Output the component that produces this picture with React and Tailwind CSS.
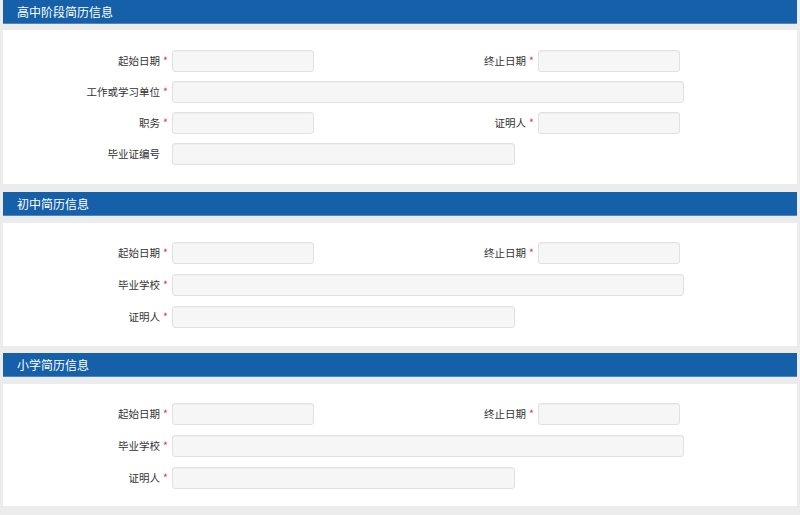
const font = { fontFamily: '"Microsoft YaHei", "Noto Sans CJK SC", "Noto Sans", sans-serif' }

function Label({ text, required, className = '' }) {
  return (
    <div className={`flex items-center justify-end shrink-0 text-[10.5px] text-[#333] ${className}`}>
      <span>{text}</span>
      <span className={`w-[11px] text-center text-[#e53935] ${required ? '' : 'invisible'}`}>*</span>
    </div>
  )
}

function Input({ className = '' }) {
  return (
    <div
      className={`h-[22px] rounded-[3px] border border-[#e1e1e1] bg-[#f6f6f6] shadow-[inset_0_1px_1px_rgba(0,0,0,0.03)] ${className}`}
    />
  )
}

function DateRow() {
  return (
    <div className="flex items-center">
      <Label text="起始日期" required className="w-[169px] pr-[1px]" />
      <Input className="w-[142px]" />
      <Label text="终止日期" required className="w-[224px] pr-[1px]" />
      <Input className="w-[142px]" />
    </div>
  )
}

function Row({ label, required = true, width }) {
  return (
    <div className="flex items-center">
      <Label text={label} required={required} className="w-[169px] pr-[1px]" />
      <Input className={width} />
    </div>
  )
}

function Section({ title, children, className = '', bodyClass = '' }) {
  return (
    <section className={className}>
      <div className="h-[24px] bg-[#1660a9] border-b border-[#4f86c0] flex items-center pl-[14px] text-[12px] text-white">
        {title}
      </div>
      <div className={`bg-white flex flex-col ${bodyClass}`}>{children}</div>
    </section>
  )
}

export default function App() {
  return (
    <div className="w-[800px] h-[515px] overflow-hidden bg-[#ececec] px-[3px]" style={font}>
      <Section title="高中阶段简历信息" bodyClass="mt-[6px] gap-[9px] pt-[20px] pb-[19px]">
        <DateRow />
        <Row label="工作或学习单位" width="w-[512px]" />
        <div className="flex items-center">
          <Label text="职务" required className="w-[169px] pr-[1px]" />
          <Input className="w-[142px]" />
          <Label text="证明人" required className="w-[224px] pr-[1px]" />
          <Input className="w-[142px]" />
        </div>
        <Row label="毕业证编号" required={false} width="w-[343px]" />
      </Section>

      {/* 初中 */}
      <Section title="初中简历信息" className="mt-[8px]" bodyClass="mt-[7px] gap-[10px] pt-[19px] pb-[18px]">
        <DateRow />
        <Row label="毕业学校" width="w-[512px]" />
        <Row label="证明人" width="w-[343px]" />
      </Section>

      {/* 小学 */}
      <Section title="小学简历信息" className="mt-[7px]" bodyClass="mt-[7px] gap-[10px] pt-[19px] pb-[17px]">
        <DateRow />
        <Row label="毕业学校" width="w-[512px]" />
        <Row label="证明人" width="w-[343px]" />
      </Section>
    </div>
  )
}
